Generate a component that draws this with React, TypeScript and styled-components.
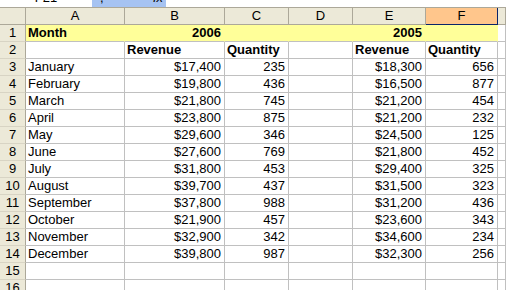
import React from "react";
import styled, { createGlobalStyle } from "styled-components";

const Global = createGlobalStyle`
  html, body { margin: 0; padding: 0; background: #ffffff; }
  body { font-family: "Liberation Sans", Arial, sans-serif; font-size: 13px; overflow: hidden; }
  * { box-sizing: border-box; }
`;

const Page = styled.div`
  width: 506px;
  height: 290px;
  overflow: hidden;
  display: flex;
  flex-direction: column;
`;

const FormulaBar = styled.div`
  display: flex;
  height: 8px;
  flex: none;
  border-bottom: 1px solid #aca899;
  overflow: hidden;
`;

const NameBox = styled.div`
  width: 92px;
  background: #ffffff;
  display: flex;
  justify-content: center;
  overflow: hidden;
`;

const ClippedText = styled.span<{ $italic?: boolean }>`
  display: block;
  line-height: 13px;
  margin-top: -9px;
  font-style: ${(p) => (p.$italic ? "italic" : "normal")};
  color: #000;
`;

const ButtonArea = styled.div`
  width: 74px;
  background: #a6c3f2;
  display: flex;
  justify-content: space-between;
  padding: 0 3px 0 8px;
  overflow: hidden;
`;

const FormulaInput = styled.div`
  flex: 1;
  background: #ffffff;
`;

const Sheet = styled.div`
  display: grid;
  grid-template-columns: 26px 99px 100px 64px 64px 73px 72px 1fr;
  grid-auto-rows: 17px;
`;

const ColHeader = styled.div<{ $selected?: boolean }>`
  height: 17px;
  background: ${(p) => (p.$selected ? "#ffc68c" : "#ece9d8")};
  border-right: 1px solid ${(p) => (p.$selected ? "#0a246a" : "#aca899")};
  border-bottom: 1px solid ${(p) => (p.$selected ? "#0a246a" : "#aca899")};
  display: flex;
  align-items: center;
  justify-content: center;
  font-size: 13px;
  line-height: 16px;
  color: #000;
`;

const Corner = styled(ColHeader)`
  background: #ece9d8;
`;

const RowHeader = styled.div`
  background: #ece9d8;
  border-right: 1px solid #aca899;
  border-bottom: 1px solid #d8d4c4;
  display: flex;
  align-items: center;
  justify-content: center;
  font-size: 13px;
  line-height: 16px;
  color: #000;
`;

const Cell = styled.div<{ $align?: "left" | "right"; $bold?: boolean; $fill?: string }>`
  background: ${(p) => p.$fill ?? "#ffffff"};
  border-right: 1px solid ${(p) => p.$fill ?? "#c0c0c0"};
  border-bottom: 1px solid #c0c0c0;
  display: flex;
  align-items: center;
  justify-content: ${(p) => (p.$align === "right" ? "flex-end" : "flex-start")};
  padding: 0 3px 0 2px;
  font-weight: ${(p) => (p.$bold ? 700 : 400)};
  font-size: 13px;
  line-height: 16px;
  white-space: nowrap;
  overflow: hidden;
  color: #000;
`;

const YELLOW = "#ffff99";

type Row = [string, string, string, string, string];

const rows: Row[] = [
  ["January", "$17,400", "235", "$18,300", "656"],
  ["February", "$19,800", "436", "$16,500", "877"],
  ["March", "$21,800", "745", "$21,200", "454"],
  ["April", "$23,800", "875", "$21,200", "232"],
  ["May", "$29,600", "346", "$24,500", "125"],
  ["June", "$27,600", "769", "$21,800", "452"],
  ["July", "$31,800", "453", "$29,400", "325"],
  ["August", "$39,700", "437", "$31,500", "323"],
  ["September", "$37,800", "988", "$31,200", "436"],
  ["October", "$21,900", "457", "$23,600", "343"],
  ["November", "$32,900", "342", "$34,600", "234"],
  ["December", "$39,800", "987", "$32,300", "256"],
];

const letters = ["A", "B", "C", "D", "E", "F", "G"];

export default function App() {
  return (
    <Page>
      <Global />
      <FormulaBar>
        <NameBox>
          <ClippedText>F21</ClippedText>
        </NameBox>
        <ButtonArea>
          <ClippedText>,</ClippedText>
          <ClippedText $italic>fx</ClippedText>
        </ButtonArea>
        <FormulaInput />
      </FormulaBar>
      <Sheet>
        <Corner />
        {letters.map((l) => (
          <ColHeader key={l} $selected={l === "F"}>
            {l === "G" ? "" : l}
          </ColHeader>
        ))}

        <RowHeader>1</RowHeader>
        <Cell $bold $fill={YELLOW}>Month</Cell>
        <Cell $bold $fill={YELLOW} $align="right">2006</Cell>
        <Cell $fill={YELLOW} />
        <Cell $fill={YELLOW} />
        <Cell $bold $fill={YELLOW} $align="right">2005</Cell>
        <Cell $fill={YELLOW} />
        <Cell />

        <RowHeader>2</RowHeader>
        <Cell />
        <Cell $bold>Revenue</Cell>
        <Cell $bold>Quantity</Cell>
        <Cell />
        <Cell $bold>Revenue</Cell>
        <Cell $bold>Quantity</Cell>
        <Cell />

        {rows.map((r, i) => (
          <React.Fragment key={r[0]}>
            <RowHeader>{i + 3}</RowHeader>
            <Cell>{r[0]}</Cell>
            <Cell $align="right">{r[1]}</Cell>
            <Cell $align="right">{r[2]}</Cell>
            <Cell />
            <Cell $align="right">{r[3]}</Cell>
            <Cell $align="right">{r[4]}</Cell>
            <Cell />
          </React.Fragment>
        ))}

        {[15, 16].map((n) => (
          <React.Fragment key={n}>
            <RowHeader>{n}</RowHeader>
            <Cell />
            <Cell />
            <Cell />
            <Cell />
            <Cell />
            <Cell />
            <Cell />
          </React.Fragment>
        ))}
      </Sheet>
    </Page>
  );
}
